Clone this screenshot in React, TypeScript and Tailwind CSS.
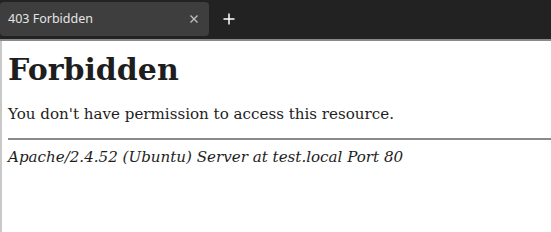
export default function App() {
  return (
    <div className="w-[551px] h-[232px] overflow-hidden bg-white flex flex-col">
      <div className="h-[39px] bg-[#222222] flex items-start pt-[2px] shrink-0">
        <div className="w-[209px] h-[34px] bg-[#3e3e3e] rounded-[4px] flex items-center pl-[8px] pr-[10px] font-['Noto_Sans',sans-serif] text-[12.5px] text-[#e4e4e4]">
          <span className="flex-1">403 Forbidden</span>
          <svg width="10" height="10" viewBox="0 0 10 10" className="text-[#bdbdbd]">
            <path d="M1.5 1.5L8.5 8.5M8.5 1.5L1.5 8.5" stroke="currentColor" strokeWidth="1.4" />
          </svg>
        </div>
        <div className="w-[40px] h-[34px] flex items-center justify-center">
          <svg width="12" height="12" viewBox="0 0 12 12" className="text-white">
            <path d="M6 0.5V11.5M0.5 6H11.5" stroke="currentColor" strokeWidth="1.5" />
          </svg>
        </div>
      </div>
      <div className="h-[2px] bg-[#8a8a8a] shrink-0" />
      <div className="flex-1 border-l-2 border-[#c8c8c8] pl-[6px] pt-[10px] w-[620px] font-['DejaVu_Serif',serif] text-[#1e1e1e]">
        <h1 className="text-[30px] font-bold leading-[38px]">Forbidden</h1>
        <p className="text-[15.1px] leading-[20px] mt-[15px]">You don't have permission to access this resource.</p>
        <hr className="mt-[14px] border-t-2 border-[#8a8a8a]" />
        <address className="text-[15.1px] leading-[20px] italic mt-[7px]">Apache/2.4.52 (Ubuntu) Server at test.local Port 80</address>
      </div>
    </div>
  );
}
